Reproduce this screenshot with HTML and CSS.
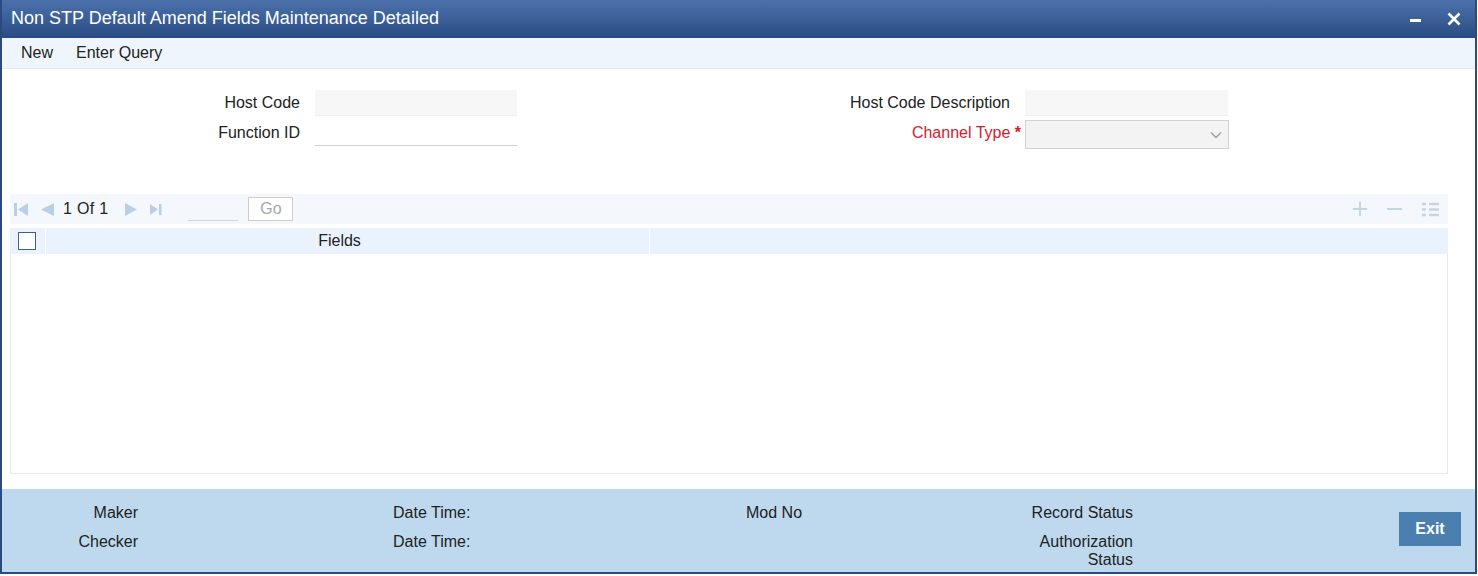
FILE: index.html
```html
<!DOCTYPE html>
<html lang="en">
<head>
    <meta charset="UTF-8">
    <title>Non STP Default Amend Fields Maintenance Detailed</title>
    <link rel="stylesheet" href="styles.css">
</head>
<body>
    <div class="window">
        <div class="titlebar">
            <span class="title">Non STP Default Amend Fields Maintenance Detailed</span>
            <div class="win-buttons">
                <svg class="win-min" width="12" height="12" viewBox="0 0 12 12"><rect x="0" y="6" width="11" height="3" fill="#fff"/></svg>
                <svg class="win-close" width="14" height="14" viewBox="0 0 14 14"><path d="M1.5 1.5 L12.5 12.5 M12.5 1.5 L1.5 12.5" stroke="#fff" stroke-width="2.6" fill="none"/></svg>
            </div>
        </div>

        <div class="menubar">
            <span class="menu-item">New</span>
            <span class="menu-item">Enter Query</span>
        </div>

        <div class="form">
            <label class="lbl">Host Code</label>
            <div class="field"><div class="input readonly"></div></div>
            <label class="lbl">Host Code Description</label>
            <div class="field"><div class="input readonly wide"></div></div>

            <label class="lbl">Function ID</label>
            <div class="field"><div class="input underline"></div></div>
            <label class="lbl required">Channel Type <span class="star">*</span></label>
            <div class="field">
                <div class="select">
                    <svg width="12" height="8" viewBox="0 0 12 8"><path d="M1 1.5 L6 6.5 L11 1.5" stroke="#9a9a9a" stroke-width="1.3" fill="none"/></svg>
                </div>
            </div>
        </div>

        <div class="grid">
            <div class="pager">
                <div class="pager-left">
                    <svg class="pg-icon" width="15" height="15" viewBox="0 0 15 15"><rect x="0" y="1" width="3" height="13" fill="#b9cfe6"/><path d="M14 1 L4 7.5 L14 14 Z" fill="#b9cfe6"/></svg>
                    <svg class="pg-icon" width="15" height="15" viewBox="0 0 15 15"><path d="M14 1 L1 7.5 L14 14 Z" fill="#b9cfe6"/></svg>
                    <span class="pg-text">1 Of 1</span>
                    <svg class="pg-icon next" width="14" height="15" viewBox="0 0 14 15"><path d="M1 1 L13 7.5 L1 14 Z" fill="#b9cfe6"/></svg>
                    <svg class="pg-icon" width="12" height="15" viewBox="0 0 12 15"><path d="M0 2 L8 7.5 L0 13 Z" fill="#b9cfe6"/><rect x="9" y="2" width="2.5" height="11" fill="#b9cfe6"/></svg>
                    <div class="pg-input"></div>
                    <div class="go-btn">Go</div>
                </div>
                <div class="pager-right">
                    <svg width="14" height="14" viewBox="0 0 14 14"><path d="M7 0 V14 M0 7 H14" stroke="#c3d4e8" stroke-width="2"/></svg>
                    <svg width="15" height="14" viewBox="0 0 15 14"><path d="M0 7 H15" stroke="#c3d4e8" stroke-width="2"/></svg>
                    <svg width="17" height="15" viewBox="0 0 17 15"><path d="M0 2 H4 M7 2 H17 M0 7.5 H4 M7 7.5 H17 M0 13 H4 M7 13 H17" stroke="#c3d4e8" stroke-width="2.4"/></svg>
                </div>
            </div>
            <div class="grid-head">
                <div class="col-check"><span class="checkbox"></span></div>
                <div class="col-fields">Fields</div>
                <div class="col-rest"></div>
            </div>
            <div class="grid-body"></div>
        </div>

        <div class="footer">
            <span class="f-lbl right">Maker</span>
            <span></span>
            <span class="f-lbl">Date Time:</span>
            <span class="f-lbl">Mod No</span>
            <span class="f-lbl right">Record Status</span>
            <div class="exit-cell"><button class="exit-btn">Exit</button></div>

            <span class="f-lbl right">Checker</span>
            <span></span>
            <span class="f-lbl">Date Time:</span>
            <span></span>
            <span class="f-lbl right">Authorization<br>Status</span>
        </div>
    </div>
</body>
</html>
```

FILE: styles.css
```css
body {
    margin: 0;
    background: #fff;
    font-family: "Liberation Sans", Arial, sans-serif;
    font-size: 16px;
    color: #222;
}

.window {
    width: 1473px;
    height: 572px;
    border: 2px solid #2b4a7e;
    border-top: none;
    background: #fff;
}

.titlebar {
    height: 38px;
    display: flex;
    align-items: center;
    justify-content: space-between;
    padding: 0 14px 0 9px;
    background: linear-gradient(to bottom, #4c71aa, #2a4c84);
}

.title {
    color: #fff;
    font-size: 18px;
    margin-top: -1px;
}

.win-buttons {
    display: flex;
    align-items: center;
    gap: 25px;
}

.menubar {
    height: 30px;
    display: flex;
    align-items: center;
    gap: 23px;
    padding-left: 19px;
    background: #eef5fd;
    border-bottom: 1px solid #e2e9f1;
}

.form {
    display: grid;
    grid-template-columns: 298px 217px 493px 1fr;
    grid-template-rows: 26px 28px;
    row-gap: 4px;
    padding-top: 21px;
}

.lbl {
    text-align: right;
    align-self: start;
    line-height: 26px;
}

.required {
    color: #d3202e;
    margin-right: -11px;
}

.star {
    font-weight: bold;
}

.field {
    padding-left: 15px;
}

.input {
    width: 202px;
    height: 26px;
    box-sizing: border-box;
}

.input.wide {
    width: 203px;
}

.readonly {
    background: #f7f7f7;
    border-bottom: 1px solid #f0f0f0;
}

.underline {
    border-bottom: 1px solid #cfcfcf;
}

.select {
    width: 204px;
    height: 29px;
    box-sizing: border-box;
    border: 1px solid #d2d2d2;
    background: #f3f3f3;
    display: flex;
    align-items: center;
    justify-content: flex-end;
    padding-right: 6px;
}

.grid {
    margin: 46px 27px 0 8px;
}

.pager {
    height: 30px;
    background: #f4f8fd;
    display: flex;
    align-items: center;
    justify-content: space-between;
}

.pager-left {
    display: flex;
    align-items: center;
    padding-left: 4px;
}

.pg-icon {
    margin-right: 11px;
}

.pg-text {
    margin: 0 16px 0 -3px;
    color: #222;
    letter-spacing: 0.3px;
}

.pg-icon.next {
    margin-right: 12px;
}

.pg-input {
    width: 50px;
    height: 24px;
    margin-left: 15px;
    border-bottom: 1px solid #d6d6d6;
    box-sizing: border-box;
    align-self: flex-end;
    margin-bottom: 1px;
}

.go-btn {
    width: 45px;
    height: 24px;
    margin-left: 10px;
    box-sizing: border-box;
    border: 1px solid #cdcdcd;
    background: #fff;
    color: #a8a8a8;
    display: flex;
    align-items: center;
    justify-content: center;
}

.pager-right {
    display: flex;
    align-items: center;
    gap: 20px;
    padding-right: 9px;
}

.grid-head {
    height: 26px;
    margin-top: 4px;
    display: flex;
    background: #eaf3fd;
}

.col-check {
    width: 36px;
    border-right: 1px solid #fff;
    display: flex;
    align-items: center;
    padding-left: 8px;
    box-sizing: border-box;
}

.checkbox {
    width: 18px;
    height: 18px;
    box-sizing: border-box;
    border: 1.5px solid #3f6088;
    background: #fff;
}

.col-fields {
    width: 604px;
    border-right: 1px solid #fff;
    text-align: center;
    line-height: 26px;
    padding-right: 16px;
    box-sizing: border-box;
}

.col-rest {
    flex: 1;
}

.grid-body {
    height: 219px;
    border: 1px solid #e9e9e9;
    border-top: none;
}

.footer {
    margin-top: 15px;
    height: 83px;
    box-sizing: border-box;
    background: #bed9ee;
    display: grid;
    grid-template-columns: 136px 255px 353px 140px 247px 1fr;
    grid-auto-rows: auto;
    row-gap: 8px;
    padding-top: 15px;
    line-height: 18px;
}

.f-lbl.right {
    text-align: right;
}

.exit-cell {
    grid-row: span 2;
    display: flex;
    justify-content: flex-end;
    padding-right: 14px;
}

.exit-btn {
    margin-top: 8px;
    width: 62px;
    height: 34px;
    border: none;
    background: #4a7fb0;
    color: #fff;
    font-family: "Liberation Sans", Arial, sans-serif;
    font-size: 16px;
    font-weight: bold;
}
```
